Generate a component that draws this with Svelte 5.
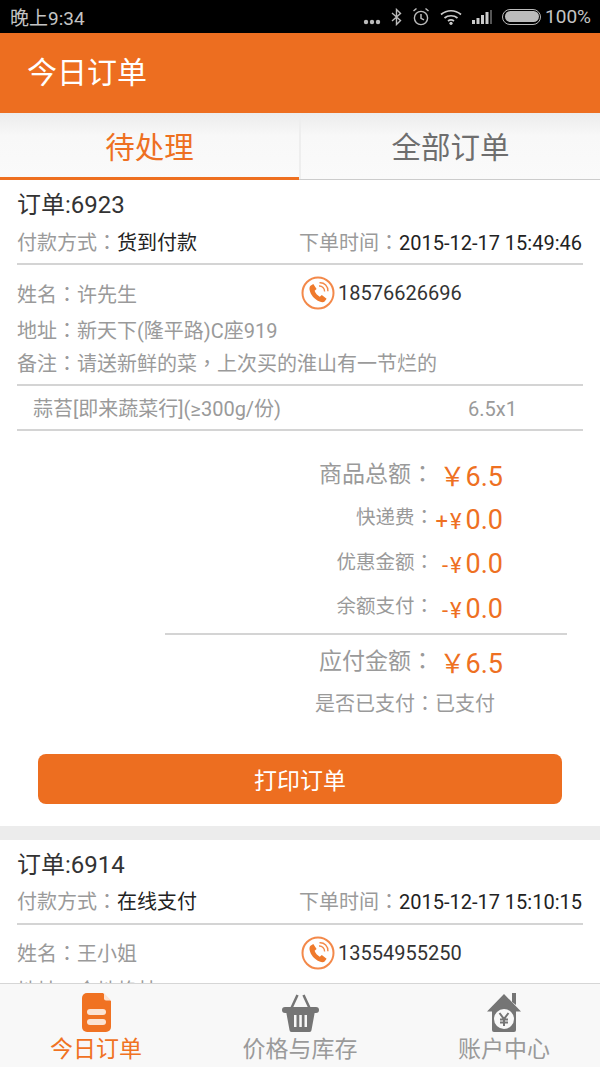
<script lang="ts">
	const orders = [
		{
			id: '6923',
			pay: '货到付款',
			time: '2015-12-17 15:49:46',
			name: '许先生',
			phone: '18576626696',
			addr: '新天下(隆平路)C座919',
			note: ['请送新鲜的菜', '上次买的淮山有一节烂的'],
			item: '蒜苔[即来蔬菜行](≥300g/份)',
			qty: '6.5x1'
		},
		{
			id: '6914',
			pay: '在线支付',
			time: '2015-12-17 15:10:15',
			name: '王小姐',
			phone: '13554955250',
			addr: '金地格林',
			note: null,
			item: '',
			qty: ''
		}
	];

	const fees = [
		{ label: '快递费', sign: '+' },
		{ label: '优惠金额', sign: '-' },
		{ label: '余额支付', sign: '-' }
	];
</script>

<div class="screen">
	<div class="status">
		<span class="clock">晚上9:34</span>
		<div class="status-icons">
			<svg class="dots" width="18" height="6" viewBox="0 0 18 6"><circle cx="3" cy="3" r="2.200" fill="#bbb" /><circle cx="9" cy="3" r="2.200" fill="#bbb" /><circle cx="15" cy="3" r="2.200" fill="#bbb" /></svg>
			<svg class="bt" width="11" height="18" viewBox="0 0 11 18"><path d="M1 5 9.500 12.500 5.500 16.500V1.500L9.500 5.500 1 13" fill="none" stroke="#bbb" stroke-width="1.400" /></svg>
			<svg class="alarm" width="18" height="19" viewBox="0 0 18 19"><circle cx="9" cy="11" r="6.600" fill="none" stroke="#bbb" stroke-width="1.400" /><path d="M9 7v4.300l3 1.500M1.500 4 4.500 1.500M16.500 4 13.500 1.500" fill="none" stroke="#bbb" stroke-width="1.500" /></svg>
			<svg class="wifi" width="22" height="16" viewBox="0 0 22 16"><path d="M1 5.500C7 .5 15 .5 21 5.500M4.500 9c3.500-3 9.500-3 13 0M8 12c1.700-1.300 4.300-1.300 6 0" fill="none" stroke="#ccc" stroke-width="1.700" /><circle cx="11" cy="14.300" r="1.600" fill="#ccc" /></svg>
			<svg class="signal" width="20" height="16" viewBox="0 0 20 16"><path d="M0 11h3v4H0zM4.500 9h3v6h-3zM9 6h3v9H9zM13.500 3h3v12h-3z" fill="#ccc" /><path d="M18 1h2v14h-2z" fill="#555" /></svg>
			<div class="battery"><div class="battery-fill"></div></div>
			<span class="percent">100%</span>
		</div>
	</div>

	<header class="topbar">今日订单</header>

	<div class="tabs">
		<div class="tab active">待处理</div>
		<div class="tab">全部订单</div>
	</div>

	<div class="list">
		{#each orders as order}
			<section class="order">
				<div class="order-id">订单:{order.id}</div>
				<div class="row pay-row">
					<span class="pay"><span class="muted">付款方式<span class="punct">：</span></span>{order.pay}</span>
					<span class="time"><span class="muted">下单时间<span class="punct">：</span></span>{order.time}</span>
				</div>
				<div class="row contact">
					<span class="muted name">姓名<span class="punct">：</span>{order.name}</span>
					<span class="phone">
						<svg width="34" height="34" viewBox="0 0 34 34">
							<circle cx="17" cy="17" r="15.500" fill="#fff" stroke="#f3894a" stroke-width="2" />
							<path d="M9.500 9.800 12.300 8l3.300 5-2 1.800c.8 2.300 2.800 4.700 5.200 6l2-1.800 4.800 3.700-2 2.800c-1 1-3 .9-5 0-5-2-9-6.500-10-11.500-.3-1.800 0-3.200.9-4.200z" fill="#ef7a2c" />
							<path d="M18 10c3-.3 5.700 2.200 5.600 5.500M18.500 6.800c5-.4 8.700 3.600 8.400 8.400" fill="none" stroke="#f3894a" stroke-width="1.400" />
						</svg>
						{order.phone}
					</span>
				</div>
				<div class="muted addr">地址<span class="punct">：</span>{order.addr}</div>
				{#if order.note}
					<div class="muted note">备注<span class="punct">：</span>{order.note[0]}<span class="punct">，</span>{order.note[1]}</div>
					<div class="item">
						<span>{order.item}</span>
						<span>{order.qty}</span>
					</div>
					<div class="totals">
						<div class="total big first">
							<span class="label">商品总额<span class="punct">：</span></span>
							<span class="value"><span class="yen">￥</span>6.5</span>
						</div>
						{#each fees as fee}
							<div class="total">
								<span class="label">{fee.label}<span class="punct">：</span></span>
								<span class="value"><span class="sign">{fee.sign}¥</span>0.0</span>
							</div>
						{/each}
						<div class="total-line"></div>
						<div class="total big">
							<span class="label">应付金额<span class="punct">：</span></span>
							<span class="value"><span class="yen">￥</span>6.5</span>
						</div>
						<div class="paid">是否已支付<span class="punct">：</span>已支付</div>
					</div>
					<button class="print">打印订单</button>
				{/if}
			</section>
		{/each}
	</div>

	<nav class="tabbar">
		<div class="nav-item active">
			<svg width="29" height="39" viewBox="0 0 29 39">
				<path d="M5 0h16l8 8v26a5 5 0 0 1-5 5H5a5 5 0 0 1-5-5V5a5 5 0 0 1 5-5z" fill="#f07222" />
				<path d="M22 0l7 7.500h-5a2 2 0 0 1-2-2z" fill="#fbe3d3" />
				<rect x="5" y="16" width="19" height="6" rx="3" fill="#fbe3d3" />
				<rect x="5" y="26" width="19" height="6" rx="3" fill="#fbe3d3" />
			</svg>
			<span>今日订单</span>
		</div>
		<div class="nav-item">
			<svg width="37" height="39" viewBox="0 0 37 39">
				<path d="M9 16 15.500 2M28 16 21.500 2" stroke="#757575" stroke-width="2.500" fill="none" />
				<rect x="0" y="14" width="37" height="6" rx="3" fill="#757575" />
				<path d="M4 18h29l-3.500 19a2 2 0 0 1-2 2h-18a2 2 0 0 1-2-2z" fill="#757575" />
				<path d="M12 22h2.500v12H12zM17.300 22h2.500v12h-2.500zM22.500 22H25v12h-2.500z" fill="#f8f8f8" />
			</svg>
			<span>价格与库存</span>
		</div>
		<div class="nav-item">
			<svg width="34" height="39" viewBox="0 0 34 39">
				<path d="M25 0h4v12l-4-3z" fill="#757575" />
				<path d="M17 1 0 18.500h5V37a2 2 0 0 0 2 2h20a2 2 0 0 0 2-2V18.500h5z" fill="#757575" />
				<circle cx="17" cy="26" r="10" fill="#f8f8f8" />
				<path d="M12.500 20 17 26l4.500-6M17 26v7M13 26.500h8M13 29.500h8" fill="none" stroke="#757575" stroke-width="2" />
			</svg>
			<span>账户中心</span>
		</div>
	</nav>
</div>

<style>
	:global(body) {
		margin: 0;
		background: #fff;
	}

	.screen {
		width: 600px;
		height: 1067px;
		display: flex;
		flex-direction: column;
		overflow: hidden;
		font-family: Roboto, 'Noto Sans CJK SC', sans-serif;
		color: #333;
	}

	/* TC has its full-width punctuation centred, like the phone's font */
	.punct {
		font-family: 'Noto Sans CJK TC', sans-serif;
	}

	.status {
		flex: 0 0 33px;
		background: #000;
		display: flex;
		align-items: center;
		justify-content: space-between;
		padding: 0 9px 0 10px;
		color: #c4c4c4;
		font-size: 19px;
	}

	.status-icons {
		display: flex;
		align-items: center;
		gap: 10px;
	}

	.status-icons > svg {
		flex: none;
	}

	.dots {
		margin-top: 10px;
	}

	.battery {
		width: 39px;
		height: 16px;
		border: 1.500px solid #bbb;
		border-radius: 8px;
		padding: 1.500px;
		box-sizing: border-box;
		margin-right: -6px;
	}

	.battery-fill {
		height: 100%;
		background: #bbb;
		border-radius: 6px;
	}

	.topbar {
		flex: 0 0 80px;
		background: #ed6e20;
		color: #fff;
		font-size: 30px;
		line-height: 80px;
		padding-left: 27px;
	}

	.tabs {
		flex: 0 0 67px;
		display: flex;
		background: linear-gradient(#ececec, #f8f8f8 35%, #fafafa);
		box-sizing: border-box;
		border-bottom: 1px solid #ccc;
	}

	.tab {
		flex: 1;
		text-align: center;
		font-size: 29.500px;
		line-height: 58px;
		padding-top: 3px;
		color: #6e6e6e;
		border-left: 2px solid #eee;
		margin-top: 3px;
	}

	.tab.active {
		flex: 0 0 299px;
		color: #ee7022;
		border-left: 0;
		margin-top: 0;
		margin-bottom: -1px;
		padding-top: 6px;
		border-bottom: 3px solid #ee6f20;
	}

	.list {
		flex: 1;
		min-height: 0;
		overflow: hidden;
		background: #ececec;
	}

	.order {
		background: #fff;
		padding: 0 17px 22px;
		margin-bottom: 14px;
	}

	.order-id {
		font-size: 24px;
		line-height: 30px;
		padding-top: 10px;
		color: #333;
	}

	.row {
		display: flex;
		justify-content: space-between;
		align-items: center;
	}

	.muted {
		color: #9a9a9a;
	}

	.pay-row {
		font-size: 20px;
		height: 45px;
		padding: 2px 0 3px;
		box-sizing: border-box;
		border-bottom: 2px solid #d4d4d4;
		color: #222;
	}

	.time {
		margin-right: 1px;
	}

	.contact {
		justify-content: flex-start;
		font-size: 20px;
		height: 50px;
		padding-top: 6px;
		box-sizing: border-box;
	}

	.name {
		flex: 0 0 284px;
	}

	.phone {
		display: flex;
		align-items: center;
		gap: 3px;
		color: #333;
	}

	.addr {
		font-size: 20px;
		line-height: 30px;
	}

	.note {
		font-size: 20px;
		line-height: 30px;
		padding-top: 2px;
		padding-bottom: 5px;
		border-bottom: 2px solid #d4d4d4;
	}

	.item {
		display: flex;
		justify-content: space-between;
		height: 43px;
		line-height: 47px;
		padding: 0 66px 0 16px;
		font-size: 20px;
		color: #9a9a9a;
		border-bottom: 2px solid #d4d4d4;
	}

	.totals {
		padding-top: 20px;
		display: flex;
		flex-direction: column;
		align-items: flex-end;
	}

	.total {
		display: flex;
		align-items: center;
		justify-content: flex-end;
		height: 44.500px;
		padding-right: 80px;
		font-size: 19.500px;
		color: #9a9a9a;
	}

	.total.first {
		height: 46.500px;
	}

	.label {
		position: relative;
		top: -4px;
		left: -1px;
	}

	.total.big {
		font-size: 23px;
	}

	.total.big .label {
		top: -2px;
	}

	.value {
		width: 68px;
		text-align: right;
		font-size: 27px;
		color: #ee7022;
		white-space: nowrap;
	}

	.yen {
		font-size: 26px;
	}

	.sign {
		font-size: 22px;
		letter-spacing: 2px;
		margin-right: 2px;
	}

	.total-line {
		width: 402px;
		margin: 2px 16px 4px 0;
		border-top: 2px solid #d4d4d4;
	}

	.paid {
		font-size: 20px;
		color: #9a9a9a;
		padding-right: 88px;
		line-height: 36px;
		margin-top: 1px;
	}

	.print {
		display: block;
		width: 524px;
		height: 50px;
		margin: 32px 0 0 21px;
		background: #ed6e20;
		color: #fff;
		border: 0;
		border-radius: 8px;
		font-family: inherit;
		font-size: 23px;
	}

	.tabbar {
		flex: 0 0 84px;
		box-sizing: border-box;
		display: flex;
		background: #f8f8f8;
		border-top: 1px solid #d6d6d6;
	}

	.nav-item {
		flex: 1;
		display: flex;
		flex-direction: column;
		align-items: center;
		padding-top: 9px;
		font-size: 23px;
		color: #9a9a9a;
	}

	.nav-item span {
		line-height: 30px;
		margin-top: 3px;
	}

	.nav-item.active {
		color: #f07222;
		flex: 0 0 192px;
	}

	.nav-item:last-child {
		flex: 0 0 192px;
	}
</style>
